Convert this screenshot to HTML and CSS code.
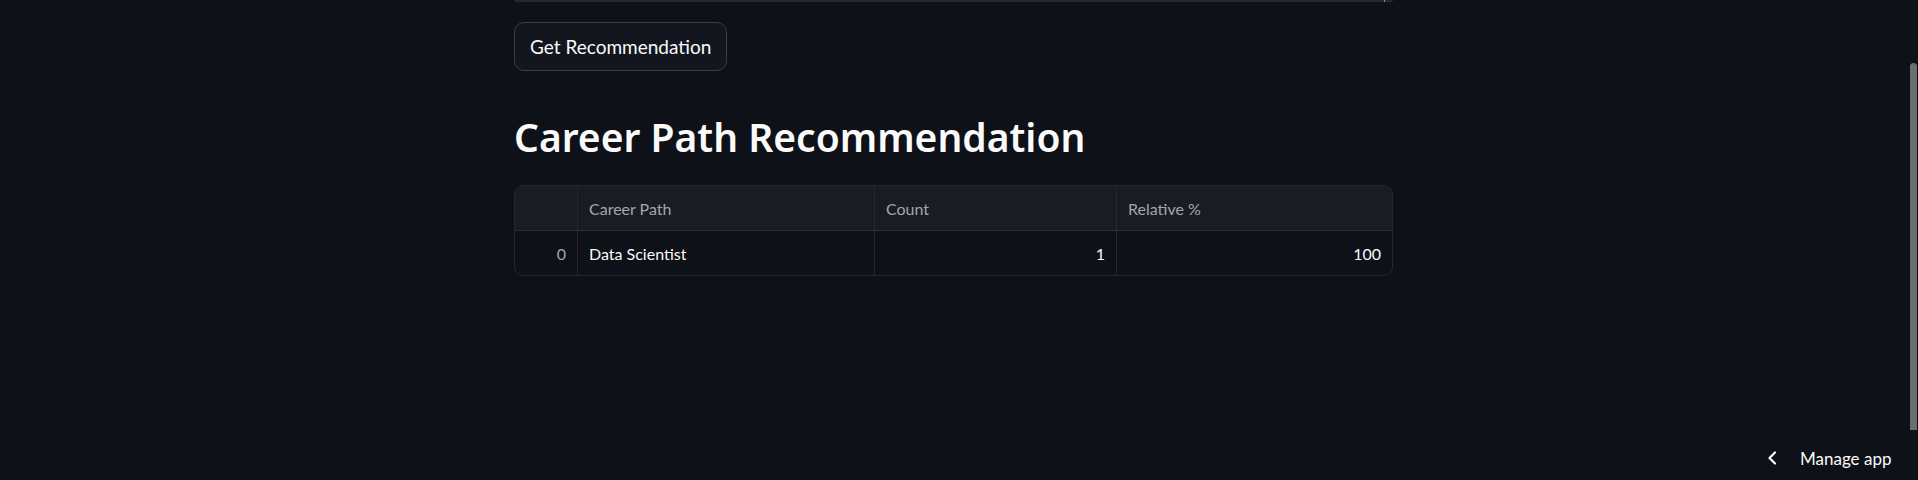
FILE: index.html
```html
<!DOCTYPE html>
<html lang="en">
<head>
<meta charset="utf-8">
<title>Career Path Recommendation</title>
<link rel="stylesheet" href="styles.css">
</head>
<body>
<main class="app">
  <section class="block">
    <div class="textarea-edge"><span class="resize-tick"></span></div>
    <button class="btn" type="button">Get Recommendation</button>
    <h2 class="title">Career Path Recommendation</h2>
    <div class="table">
      <div class="row head">
        <div class="cell idx"></div>
        <div class="cell c-path">Career Path</div>
        <div class="cell c-count">Count</div>
        <div class="cell c-rel">Relative %</div>
      </div>
      <div class="row body">
        <div class="cell idx num">0</div>
        <div class="cell c-path">Data Scientist</div>
        <div class="cell c-count num">1</div>
        <div class="cell c-rel num">100</div>
      </div>
    </div>
  </section>
</main>
<div class="scroll-thumb"></div>
<div class="manage">
  <svg class="chev" width="12" height="14" viewBox="0 0 12 14"><path d="M9 1.5 L3.5 7 L9 12.5" fill="none" stroke="#fafafa" stroke-width="2.2" stroke-linecap="round" stroke-linejoin="round"/></svg>
  <span class="manage-text">Manage app</span>
</div>
</body>
</html>
```
FILE: styles.css
```css
html, body {
  margin: 0;
  padding: 0;
  height: 100%;
  background: #0e1117;
  overflow: hidden;
  font-family: Lato, "Noto Sans", "Liberation Sans", sans-serif;
  color: #fafafa;
}
.app {
  width: 1907px;
  display: flex;
  justify-content: center;
}
.block {
  width: 879px;
  display: flex;
  flex-direction: column;
  align-items: flex-start;
}
.textarea-edge {
  width: 879px;
  height: 2px;
  background: #262730;
  border-radius: 0 0 6px 6px;
  position: relative;
}
.resize-tick {
  position: absolute;
  right: 8px;
  top: 0;
  width: 1px;
  height: 2px;
  background: #8a8c92;
}
.btn {
  margin-top: 20px;
  height: 49px;
  padding: 0 15px;
  background: #13161e;
  border: 1px solid #3b3e45;
  border-radius: 10px;
  color: #fafafa;
  font-family: Lato, "Noto Sans", sans-serif;
  font-size: 19px;
  line-height: 1;
  cursor: pointer;
}
.title {
  margin: 42px 0 0 0;
  font-family: "Noto Sans", Lato, sans-serif;
  font-size: 39px;
  font-weight: 600;
  line-height: 48px;
  letter-spacing: 0;
  color: #fafafa;
}
.table {
  margin-top: 24px;
  width: 879px;
  border: 1px solid #26282e;
  border-radius: 9px;
  overflow: hidden;
  box-sizing: border-box;
}
.row {
  display: grid;
  grid-template-columns: 63px 297px 242px 1fr;
  height: 44px;
}
.row.head {
  background: #1a1c23;
  border-bottom: 1px solid #2c2e34;
  height: 44px;
}
.cell {
  display: flex;
  align-items: center;
  padding: 0 11px;
  font-size: 16px;
  border-right: 1px solid #26282e;
  white-space: nowrap;
}
.cell:last-child { border-right: none; }
.head .cell { color: #a3a6ae; }
.body .cell { color: #fafafa; }
.cell.num { justify-content: flex-end; }
.body .idx { color: #a3a6ae; }
.scroll-thumb {
  position: absolute;
  left: 1910px;
  top: 63px;
  width: 7px;
  height: 367px;
  background: #6c6d72;
  border-radius: 4px 4px 0 0;
}
.manage {
  position: absolute;
  left: 1766px;
  top: 447px;
  display: flex;
  align-items: center;
  gap: 22px;
  height: 22px;
}
.chev { display: block; }
.manage-text {
  font-size: 17px;
  color: #fafafa;
}
```
